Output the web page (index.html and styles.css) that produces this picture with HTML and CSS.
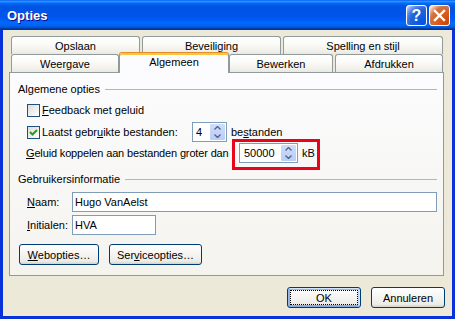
FILE: index.html
```html
<!DOCTYPE html>
<html lang="nl">
<head>
    <meta charset="UTF-8">
    <title>Opties</title>
    <link rel="stylesheet" href="styles.css">
</head>
<body>
    <div class="window">
        <div class="titlebar">
            <span class="title">Opties</span>
            <div class="title-buttons">
                <span class="tbtn help">?</span>
                <span class="tbtn close">
                    <svg width="13" height="13" viewBox="0 0 13 13"><path d="M2 2 L11 11 M11 2 L2 11" stroke="#fff" stroke-width="2.4" stroke-linecap="square"/></svg>
                </span>
            </div>
        </div>

        <div class="client">
            <!-- tabbladen -->
            <div class="tabs">
                <div class="tabrow">
                    <div class="tab w-opslaan">Opslaan</div>
                    <div class="tab w-beveiliging">Beveiliging</div>
                    <div class="tab w-spelling">Spelling en stijl</div>
                </div>
                <div class="tabrow">
                    <div class="tab w-weergave">Weergave</div>
                    <div class="tab active w-algemeen">Algemeen</div>
                    <div class="tab w-bewerken">Bewerken</div>
                    <div class="tab w-afdrukken">Afdrukken</div>
                </div>
            </div>

            <div class="panel">
                <div class="legend"><span>Algemene opties</span></div>

                <div class="opt r1">
                    <label class="check"><span class="box"></span><span><u>F</u>eedback met geluid</span></label>
                </div>

                <div class="opt r2">
                    <label class="check recent">
                        <span class="box checked">
                            <svg width="11" height="11" viewBox="0 0 11 11"><path d="M2 5 L4.5 7.5 L9 3" fill="none" stroke="#21a121" stroke-width="2"/></svg>
                        </span>
                        <span>Laatst gebr<u>u</u>ikte bestanden:</span>
                    </label>
                    <div class="spin spin-small">
                        <span class="val">4</span>
                        <span class="arrows">
                            <span class="arr"><svg width="7" height="4" viewBox="0 0 7 4"><path d="M0.5 3.5 L3.5 0.5 L6.5 3.5" fill="none" stroke="#4d6185" stroke-width="1.3"/></svg></span>
                            <span class="arr"><svg width="7" height="4" viewBox="0 0 7 4"><path d="M0.5 0.5 L3.5 3.5 L6.5 0.5" fill="none" stroke="#4d6185" stroke-width="1.3"/></svg></span>
                        </span>
                    </div>
                    <span class="after">be<u>s</u>tanden</span>
                </div>

                <div class="opt r3">
                    <span class="sound"><u>G</u>eluid koppelen aan bestanden groter dan</span>
                    <div class="mark">
                        <div class="spin spin-wide">
                            <span class="val">50000</span>
                            <span class="arrows">
                                <span class="arr"><svg width="7" height="4" viewBox="0 0 7 4"><path d="M0.5 3.5 L3.5 0.5 L6.5 3.5" fill="none" stroke="#4d6185" stroke-width="1.3"/></svg></span>
                                <span class="arr"><svg width="7" height="4" viewBox="0 0 7 4"><path d="M0.5 0.5 L3.5 3.5 L6.5 0.5" fill="none" stroke="#4d6185" stroke-width="1.3"/></svg></span>
                            </span>
                        </div>
                        <span class="after">kB</span>
                    </div>
                </div>

                <div class="legend g2"><span>Gebruikersinformatie</span></div>

                <div class="fields">
                    <span class="flabel"><u>N</u>aam:</span>
                    <div class="field">Hugo VanAelst</div>
                    <span class="flabel"><u>I</u>nitialen:</span>
                    <div class="field short">HVA</div>
                </div>

                <div class="actions">
                    <button class="btn w-web"><u>W</u>ebopties…</button>
                    <button class="btn w-service">Ser<u>v</u>iceopties…</button>
                </div>
            </div>

            <div class="footer">
                <button class="btn w-ok default">OK</button>
                <button class="btn w-ok">Annuleren</button>
            </div>
        </div>
    </div>
</body>
</html>
```

FILE: styles.css
```css
* {
    box-sizing: border-box;
}
body {
    margin: 0;
    font-family: "Liberation Sans", Arial, sans-serif;
    font-size: 11px;
    color: #000;
}
u {
    text-decoration: underline;
}
.window {
    width: 455px;
    height: 319px;
    display: flex;
    flex-direction: column;
}
.titlebar {
    height: 30px;
    flex: none;
    display: flex;
    align-items: center;
    justify-content: space-between;
    padding: 1px 5px 0 7px;
    background: linear-gradient(180deg, #0058ee 0%, #3593ff 4%, #288eff 6%, #127dff 8%, #036ffc 10%, #0262ee 14%, #0057e5 20%, #0054e3 24%, #0055eb 56%, #005bf5 66%, #026afe 76%, #0062ef 86%, #0052d6 92%, #0040ab 94%, #003092 100%);
}
.title {
    color: #fff;
    font-weight: bold;
    font-size: 13px;
    text-shadow: 1px 1px #0f1089;
}
.title-buttons {
    display: flex;
    gap: 2px;
}
.tbtn {
    width: 21px;
    height: 21px;
    border: 1px solid #fff;
    border-radius: 3px;
    display: flex;
    align-items: center;
    justify-content: center;
}
.help {
    color: #fff;
    font-weight: bold;
    font-size: 16px;
    background: radial-gradient(circle at 90% 90%, #0054e9 0%, #2263d5 55%, #4479e4 70%, #a3bbec 90%, #fff 100%);
}
.close {
    background: radial-gradient(circle at 90% 90%, #cc4600 0%, #dc6527 55%, #cd7546 70%, #ffccb2 90%, #fff 100%);
}
.client {
    flex: 1;
    background: #ece9d8;
    border: 3px solid #0831d9;
    border-top: none;
    padding: 6px 6px 0 6px;
    display: flex;
    flex-direction: column;
}

/* tabs */
.tabs {
    margin-left: 2px;
    width: 432px;
}
.tabrow {
    display: flex;
    gap: 2px;
    height: 18px;
}
.tab {
    height: 18px;
    border: 1px solid #919b9c;
    border-bottom: none;
    border-radius: 3px 3px 0 0;
    background: linear-gradient(#fff, #fbfbf9 40%, #f1f0ea 80%, #e9e8e1);
    display: flex;
    align-items: center;
    justify-content: center;
    padding-top: 1px;
}
.tab.active {
    height: 21px;
    margin: -2px -2px -1px;
    position: relative;
    z-index: 1;
    border-top-color: #e68b2c;
    background: #fcfcfe;
    box-shadow: inset 0 2px #ffc73c;
    padding-bottom: 3px;
}
.w-opslaan { width: 129px; }
.w-beveiliging { width: 139px; }
.w-spelling { width: 160px; }
.w-weergave { width: 108px; }
.w-algemeen { width: 110px; }
.w-bewerken { width: 104px; }
.w-afdrukken { width: 108px; }

.panel {
    width: 435px;
    height: 204px;
    flex: none;
    border: 1px solid #919b9c;
    background: linear-gradient(#fcfcfe, #f4f3ee);
    padding: 9px 6px 0 8px;
}
.legend {
    display: flex;
    align-items: center;
    height: 14px;
}
.legend::after {
    content: "";
    flex: 1;
    height: 1px;
    background: #b8b6a6;
    margin-left: 5px;
}
.g2 {
    margin-top: 9px;
}
.opt {
    display: flex;
    align-items: center;
    margin-left: 9px;
    white-space: nowrap;
}
.r1 {
    height: 18px;
    margin-top: 5px;
}
.r2 {
    height: 20px;
    margin-top: 3px;
}
.r3 {
    height: 20px;
    margin-top: 1px;
    margin-left: 8px;
}
.check {
    display: flex;
    align-items: center;
    gap: 2px;
}
.recent {
    width: 165px;
}
.box {
    width: 13px;
    height: 13px;
    border: 1px solid #1c5180;
    background: linear-gradient(135deg, #dcdcd7, #fff);
    display: flex;
    align-items: center;
    justify-content: center;
}
.sound {
    width: 213px;
    letter-spacing: -0.15px;
}
.spin {
    display: flex;
    height: 20px;
    border: 1px solid #7f9db9;
    background: #fff;
}
.spin-small { width: 35px; }
.spin-wide { width: 59px; }
.spin .val {
    flex: 1;
    display: flex;
    align-items: center;
    padding-left: 3px;
}
.spin-wide .val {
    padding-left: 4px;
}
.arrows {
    width: 15px;
    margin: 1px;
    display: flex;
    flex-direction: column;
    background: linear-gradient(#cfdcfb, #b9cdf7);
    border-radius: 1px;
}
.arr {
    flex: 1;
    display: flex;
    align-items: center;
    justify-content: center;
}
.after {
    margin-left: 4px;
}
.mark {
    position: relative;
    display: flex;
    align-items: center;
}
.mark::after {
    content: "";
    position: absolute;
    left: -7px;
    top: -4px;
    right: -5px;
    bottom: -7px;
    border: 3px solid #e8041b;
}
.fields {
    display: grid;
    grid-template-columns: 45px 1fr;
    row-gap: 3px;
    margin: 6px 0 0 9px;
    align-items: center;
}
.field {
    height: 20px;
    border: 1px solid #7f9db9;
    background: #fff;
    padding-left: 2px;
    display: flex;
    align-items: center;
}
.field.short {
    width: 84px;
}
.actions {
    display: flex;
    gap: 10px;
    margin: 9px 0 0 1px;
}
.btn {
    height: 21px;
    border: 1px solid #003c74;
    border-radius: 3px;
    background: linear-gradient(180deg, #fff, #ecebe6 86%, #d6d0c5);
    font-family: "Liberation Sans", Arial, sans-serif;
    font-size: 11px;
    color: #000;
    padding: 0;
}
.w-web { width: 80px; }
.w-service { width: 93px; }
.w-ok { width: 74px; }
.footer {
    display: flex;
    justify-content: flex-end;
    gap: 10px;
    margin: 11px 1px 0 0;
}
.btn.default {
    box-shadow: inset -1px 1px #cee7ff, inset 1px 2px #98b8ea, inset -2px 2px #bcd4f6, inset 1px -1px #89ade4, inset 2px -2px #89ade4;
    outline: 1px dotted #000;
    outline-offset: -4px;
}
```
